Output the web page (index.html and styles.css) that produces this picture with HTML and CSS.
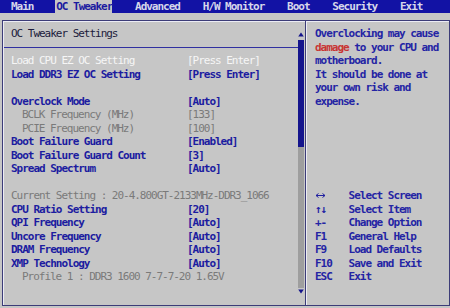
FILE: index.html
```html
<!DOCTYPE html>
<html>
<head>
<meta charset="utf-8">
<link rel="stylesheet" href="styles.css">
</head>
<body>
<div class="topbar">
  <span class="tab">Main</span>
  <span class="tab active">OC Tweaker</span>
  <span class="tab">Advanced</span>
  <span class="tab">H/W Monitor</span>
  <span class="tab">Boot</span>
  <span class="tab">Security</span>
  <span class="tab">Exit</span>
</div>
<div class="frame">
  <div class="left">
    <div class="list">
      <div class="title">OC Tweaker Settings</div>
      <div class="sep"></div>
      <div class="row sel"><span>Load CPU EZ OC Setting</span><span>[Press Enter]</span></div>
      <div class="row"><span>Load DDR3 EZ OC Setting</span><span>[Press Enter]</span></div>
      <div class="row"></div>
      <div class="row"><span>Overclock Mode</span><span>[Auto]</span></div>
      <div class="row dim"><span class="ind">BCLK Frequency (MHz)</span><span>[133]</span></div>
      <div class="row dim"><span class="ind">PCIE Frequency (MHz)</span><span>[100]</span></div>
      <div class="row"><span>Boot Failure Guard</span><span>[Enabled]</span></div>
      <div class="row"><span>Boot Failure Guard Count</span><span>[3]</span></div>
      <div class="row"><span>Spread Spectrum</span><span>[Auto]</span></div>
      <div class="row"></div>
      <div class="line dim">Current Setting : 20-4.800GT-2133MHz-DDR3_1066</div>
      <div class="row"><span>CPU Ratio Setting</span><span>[20]</span></div>
      <div class="row"><span>QPI Frequency</span><span>[Auto]</span></div>
      <div class="row"><span>Uncore Frequency</span><span>[Auto]</span></div>
      <div class="row"><span>DRAM Frequency</span><span>[Auto]</span></div>
      <div class="row"><span>XMP Technology</span><span>[Auto]</span></div>
      <div class="line dim ind">Profile 1 : DDR3 1600 7-7-7-20 1.65V</div>
    </div>
    <div class="scroll">
      <svg class="arr" width="6" height="5" viewBox="0 0 6 5"><path d="M3 0.5L5.8 4.5H0.2Z" fill="#14148c"/></svg>
      <div class="track"><div class="thumb"></div></div>
      <svg class="arr down" width="6" height="5" viewBox="0 0 6 5"><path d="M0.2 0.5H5.8L3 4.5Z" fill="#14148c"/></svg>
    </div>
  </div>
  <div class="right">
    <div class="help">
      <div>Overclocking may cause</div>
      <div><span class="red">damage</span> to your CPU and</div>
      <div>motherboard.</div>
      <div>It should be done at</div>
      <div>your own risk and</div>
      <div>expense.</div>
    </div>
    <div class="keys">
      <span class="k"><svg width="11" height="7" viewBox="0 0 11 7"><path d="M1 3.5H10M1 3.5L3.5 1.5M1 3.5L3.5 5.5M10 3.5L7.5 1.5M10 3.5L7.5 5.5" stroke="#2020a0" stroke-width="1" fill="none"/></svg></span><span>Select Screen</span>
      <span class="k">↑↓</span><span>Select Item</span>
      <span class="k">+-</span><span>Change Option</span>
      <span class="k">F1</span><span>General Help</span>
      <span class="k">F9</span><span>Load Defaults</span>
      <span class="k">F10</span><span>Save and Exit</span>
      <span class="k">ESC</span><span>Exit</span>
    </div>
  </div>
</div>
</body>
</html>
```
FILE: styles.css
```css
* { box-sizing: border-box; margin: 0; padding: 0; }
html, body { width: 450px; height: 308px; overflow: hidden; }
body {
  background: #c6c6c6;
  font-family: "DejaVu Sans Mono", "Liberation Mono", monospace;
  font-size: 11px;
  letter-spacing: -1.02px;
  color: #1c1ca0;
}
.topbar {
  height: 13px;
  line-height: 13px;
  background: #1212a4;
  color: #d6d6ea;
  font-weight: bold;
  display: flex;
  gap: 22.8px;
  padding-left: 11px;
}
.tab.active {
  background: #c6c6c6;
  color: #1c1ca0;
  padding-left: 1px;
  margin-left: -1px;
}
.frame {
  margin: 7px 0 0 2px;
  width: 448px;
  height: 286px;
  border: 1px solid #3c3c78;
  box-shadow: inset 1px 1px 0 #ececf4;
  display: flex;
}
.left { width: 302px; display: flex; }
.list { width: 295px; padding: 6px 0 0 8px; line-height: 13.5px; }
.title { height: 13.5px; color: #1c1c3c; }
.sep {
  height: 7px;
  margin: 0 0 6.5px -7px;
  border-bottom: 1px solid #3030a0;
}
.row {
  display: grid;
  grid-template-columns: 176px 1fr;
  height: 13.5px;
  font-weight: bold;
  white-space: nowrap;
}
.line { height: 13.5px; white-space: nowrap; }
.row.sel { color: #f6f6f6; font-weight: normal; }
.dim { color: #7a7a7a; font-weight: normal; }
.ind { padding-left: 11px; }
.scroll { width: 7px; padding-top: 11px; }
.arr { display: block; }
.track { margin-top: 3px; width: 6px; height: 248px; background: #9e9e9e; }
.thumb { width: 6px; height: 107px; background: #14148c; }
.arr.down { margin-top: 1px; }
.right {
  width: 144px;
  border-left: 1px solid #3c3c78;
  box-shadow: inset 1px 0 0 #ececf4;
  padding: 6px 0 0 9px;
  line-height: 13.5px;
  font-weight: bold;
  color: #2424a4;
}
.help div { height: 13.5px; white-space: nowrap; }
.red { color: #c83434; }
.keys {
  margin-top: 81px;
  display: grid;
  grid-template-columns: 33.6px 1fr;
  grid-auto-rows: 13.5px;
  white-space: nowrap;
}
.k { display: flex; align-items: center; }
```
